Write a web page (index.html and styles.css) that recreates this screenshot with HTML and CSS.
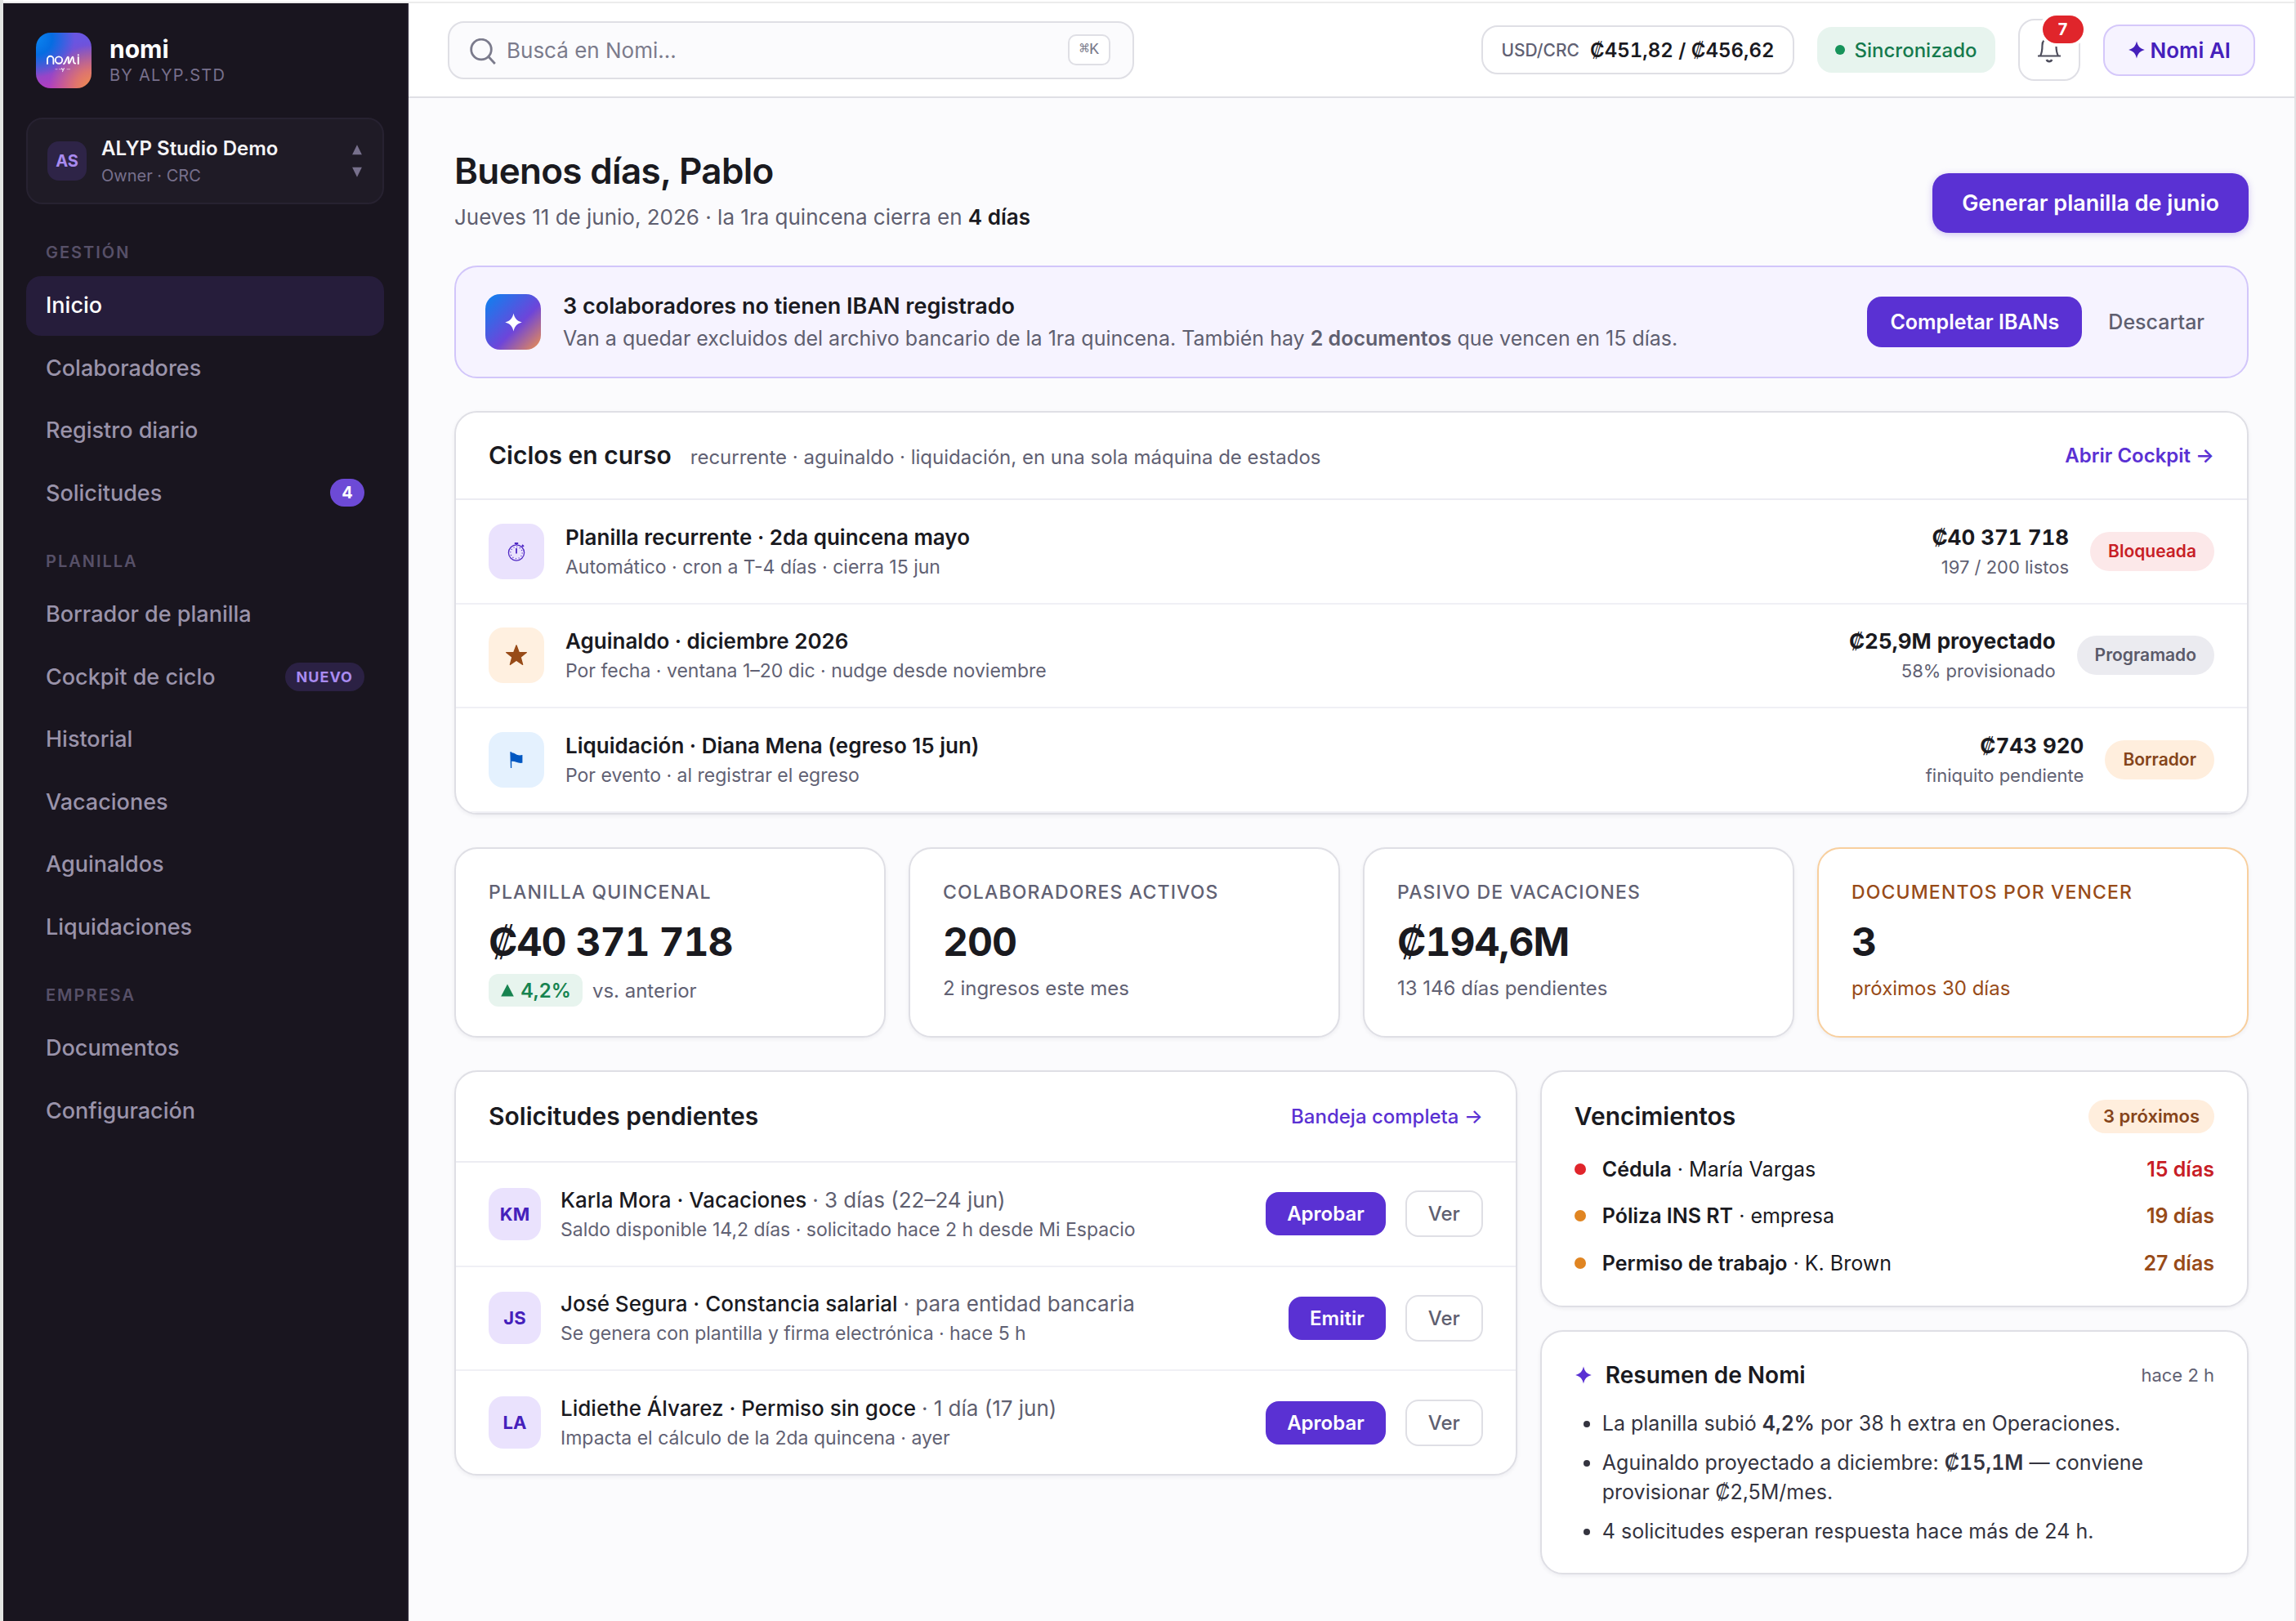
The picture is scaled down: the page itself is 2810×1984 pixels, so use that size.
FILE: index.html
```html
<!DOCTYPE html>
<html lang="es">
<head>
<meta charset="utf-8">
<title>Nomi · Inicio</title>
<link rel="stylesheet" href="styles.css">
</head>
<body>
<div class="app">
  <aside class="sidebar">
    <div class="brand">
      <div class="brand-logo">
        <svg viewBox="0 0 68 68" width="68" height="68" fill="none" stroke="#fff" stroke-width="1.900" stroke-linecap="round" stroke-linejoin="round">
          <path d="M14 38v-5.500a3.700 3.700 0 0 1 7.400 0V38"/>
          <circle cx="28" cy="33.600" r="4.200"/>
          <path d="M34 38.200c2.200-1 3.600-8.600 5.200-8.600s-.4 8 1.200 8 3-8 4.600-8-.4 8.400 3.200 8"/>
          <path d="M51.800 30v8M51.800 27.300v.1"/>
          <path d="M24 44.600h2M28.500 44.600h3M38 44.600h3.500" stroke-width="1.200" opacity=".4"/>
          <path d="M31.500 43.600l1.400 2.200 1.600-2.200-2 4" stroke-width="1.100" opacity=".8"/>
        </svg>
      </div>
      <div class="brand-text">
        <div class="brand-name">nomi</div>
        <div class="brand-sub">BY ALYP.STD</div>
      </div>
    </div>
    <div class="tenant">
      <div class="tenant-avatar">AS</div>
      <div class="tenant-text">
        <div class="tenant-name">ALYP Studio Demo</div>
        <div class="tenant-sub">Owner · CRC</div>
      </div>
      <svg class="tenant-arrows" width="12" height="40" viewBox="0 0 12 40" fill="currentColor"><path d="M6 .3l5.900 12H.1zM6 39.700L.1 27.700h11.800z"/></svg>
    </div>
    <nav class="nav">
      <div class="nav-label">GESTIÓN</div>
      <a class="nav-item active"><span>Inicio</span></a>
      <a class="nav-item"><span>Colaboradores</span></a>
      <a class="nav-item"><span>Registro diario</span></a>
      <a class="nav-item"><span>Solicitudes</span><span class="count">4</span></a>
      <div class="nav-label">PLANILLA</div>
      <a class="nav-item"><span>Borrador de planilla</span></a>
      <a class="nav-item"><span>Cockpit de ciclo</span><span class="new">NUEVO</span></a>
      <a class="nav-item"><span>Historial</span></a>
      <a class="nav-item"><span>Vacaciones</span></a>
      <a class="nav-item"><span>Aguinaldos</span></a>
      <a class="nav-item"><span>Liquidaciones</span></a>
      <div class="nav-label">EMPRESA</div>
      <a class="nav-item"><span>Documentos</span></a>
      <a class="nav-item"><span>Configuración</span></a>
    </nav>
  </aside>

  <div class="page">
    <header class="topbar">
      <div class="search">
        <svg width="32" height="32" viewBox="0 0 32 32" fill="none" stroke="currentColor" stroke-width="2.800"><circle cx="14" cy="13.500" r="12.300"/><path d="M22.500 22l8.300 9"/></svg>
        <span class="search-text">Buscá en Nomi...</span>
        <span class="kbd">⌘K</span>
      </div>
      <div class="tools">
        <div class="fx"><span class="fx-label">USD/CRC</span><span class="fx-value">₡451,82 / ₡456,62</span></div>
        <div class="sync"><i></i>Sincronizado</div>
        <div class="bell">
          <svg width="30" height="36" viewBox="0 0 30 36" fill="none" stroke="currentColor" stroke-width="2.200"><path d="M1 25.500h28M4 25.500C6.500 21 6.500 17 6.500 12.500 6.500 7 9.500 4 15 4s8.500 3 8.500 8.500c0 4.500 0 8.500 2.500 13M15 4V1"/><path d="M11.800 30c.6 1.600 1.800 2.200 3.200 2.200s2.600-.6 3.200-2.200" stroke-width="2.600"/></svg>
          <span class="bell-count">7</span>
        </div>
        <div class="ai"><svg width="20" height="22" viewBox="0 0 20 22" fill="currentColor"><path d="M10 .5C11.400 6.500 14 9.500 19.800 11 14 12.500 11.400 15.500 10 21.500 8.600 15.500 6 12.500.2 11 6 9.500 8.600 6.500 10 .5z"/></svg>Nomi AI</div>
      </div>
    </header>

    <main class="content">
      <section class="hero">
        <div>
          <h1>Buenos días, Pablo</h1>
          <p>Jueves 11 de junio, 2026 · la 1ra quincena cierra en <b>4 días</b></p>
        </div>
        <button class="btn btn-lg">Generar planilla de junio</button>
      </section>

      <section class="banner">
        <div class="banner-icon"><svg width="23" height="23" viewBox="0 0 20 22" fill="#fff"><path d="M10 .5C11.400 6.500 14 9.500 19.800 11 14 12.500 11.400 15.500 10 21.500 8.600 15.500 6 12.500.2 11 6 9.500 8.600 6.500 10 .5z"/></svg></div>
        <div class="banner-text">
          <div class="banner-title">3 colaboradores no tienen IBAN registrado</div>
          <div class="banner-sub">Van a quedar excluidos del archivo bancario de la 1ra quincena. También hay <b>2 documentos</b> que vencen en 15 días.</div>
        </div>
        <button class="btn btn-md">Completar IBANs</button>
        <button class="btn-ghost">Descartar</button>
      </section>

      <section class="card cycles">
        <div class="card-head">
          <h2>Ciclos en curso</h2>
          <span class="head-note">recurrente · aguinaldo · liquidación, en una sola máquina de estados</span>
          <a class="link strong">Abrir Cockpit →</a>
        </div>
        <div class="row">
          <div class="tile violet"><svg width="24" height="26" viewBox="0 0 24 26" fill="none" stroke="currentColor"><circle cx="12" cy="14.500" r="9.600" stroke-width="1.300"/><circle cx="12" cy="14.500" r="7.200" stroke-width="1.300" stroke-dasharray="1 2.770"/><path d="M12 9v6.500" stroke-width="1.800"/><path d="M12 5V3.600M18.500 7.500l1.500-1.600" stroke-width="1.300"/><path d="M9.800 3h4.400M19 4.900l2 2" stroke-width="1.800"/></svg></div>
          <div class="row-text"><div class="row-title">Planilla recurrente · 2da quincena mayo</div><div class="row-sub">Automático · cron a T-4 días · cierra 15 jun</div></div>
          <div class="row-amount"><div class="row-title bold">₡40 371 718</div><div class="row-sub">197 / 200 listos</div></div>
          <span class="pill red">Bloqueada</span>
        </div>
        <div class="row">
          <div class="tile orange"><svg width="28" height="28" viewBox="0 0 28 28" fill="currentColor" stroke="currentColor" stroke-width="1.200" stroke-linejoin="round"><path d="M14 1.800l3.200 8.500 9.200.2-7.200 5.700 2.500 9.300L14 20.300l-7.700 5.200 2.500-9.300-7.200-5.700 9.200-.2z"/></svg></div>
          <div class="row-text"><div class="row-title">Aguinaldo · diciembre 2026</div><div class="row-sub">Por fecha · ventana 1–20 dic · nudge desde noviembre</div></div>
          <div class="row-amount"><div class="row-title bold">₡25,9M proyectado</div><div class="row-sub">58% provisionado</div></div>
          <span class="pill gray">Programado</span>
        </div>
        <div class="row">
          <div class="tile blue"><svg width="16" height="20" viewBox="0 0 16 20" fill="currentColor"><path d="M.3.300h1.900v1c3.600-.4 5.200 2.600 8.300 3 1.600.2 2.900 0 4.900-.2v9.700c-6 .9-8.800-2.400-13.200-2V20H.900z"/></svg></div>
          <div class="row-text"><div class="row-title">Liquidación · Diana Mena (egreso 15 jun)</div><div class="row-sub">Por evento · al registrar el egreso</div></div>
          <div class="row-amount"><div class="row-title bold">₡743 920</div><div class="row-sub">finiquito pendiente</div></div>
          <span class="pill amber">Borrador</span>
        </div>
      </section>

      <section class="kpis">
        <div class="card kpi"><div class="kpi-label">PLANILLA QUINCENAL</div><div class="kpi-value">₡40 371 718</div><div class="kpi-sub"><span class="delta"><svg width="16" height="16" viewBox="0 0 16 16" fill="currentColor"><path d="M8 .5L15.800 15.600H.2z"/></svg>4,2%</span>vs. anterior</div></div>
        <div class="card kpi"><div class="kpi-label">COLABORADORES ACTIVOS</div><div class="kpi-value">200</div><div class="kpi-sub">2 ingresos este mes</div></div>
        <div class="card kpi"><div class="kpi-label">PASIVO DE VACACIONES</div><div class="kpi-value">₡194,6M</div><div class="kpi-sub">13 146 días pendientes</div></div>
        <div class="card kpi warn"><div class="kpi-label">DOCUMENTOS POR VENCER</div><div class="kpi-value">3</div><div class="kpi-sub">próximos 30 días</div></div>
      </section>

      <section class="columns">
        <div class="card requests">
          <div class="card-head">
            <h2>Solicitudes pendientes</h2>
            <a class="link">Bandeja completa →</a>
          </div>
          <div class="row">
            <div class="avatar">KM</div>
            <div class="row-text"><div class="row-title">Karla Mora · Vacaciones <span>· 3 días (22–24 jun)</span></div><div class="row-sub">Saldo disponible 14,2 días · solicitado hace 2 h desde Mi Espacio</div></div>
            <button class="btn btn-sm">Aprobar</button><button class="btn-outline">Ver</button>
          </div>
          <div class="row">
            <div class="avatar">JS</div>
            <div class="row-text"><div class="row-title">José Segura · Constancia salarial <span>· para entidad bancaria</span></div><div class="row-sub">Se genera con plantilla y firma electrónica · hace 5 h</div></div>
            <button class="btn btn-sm">Emitir</button><button class="btn-outline">Ver</button>
          </div>
          <div class="row">
            <div class="avatar">LA</div>
            <div class="row-text"><div class="row-title">Lidiethe Álvarez · Permiso sin goce <span>· 1 día (17 jun)</span></div><div class="row-sub">Impacta el cálculo de la 2da quincena · ayer</div></div>
            <button class="btn btn-sm">Aprobar</button><button class="btn-outline">Ver</button>
          </div>
        </div>

        <div class="side">
          <div class="card due">
            <div class="due-head"><h2>Vencimientos</h2><span class="pill amber small">3 próximos</span></div>
            <div class="due-row"><i class="dot-red"></i><span><b>Cédula</b> · María Vargas</span><b class="days-red">15 días</b></div>
            <div class="due-row"><i></i><span><b>Póliza INS RT</b> · empresa</span><b class="days">19 días</b></div>
            <div class="due-row"><i></i><span><b>Permiso de trabajo</b> · K. Brown</span><b class="days">27 días</b></div>
          </div>
          <div class="card summary">
            <div class="summary-head"><svg width="22" height="22" viewBox="0 0 20 22" fill="currentColor"><path d="M10 .5C11.400 6.500 14 9.500 19.800 11 14 12.500 11.400 15.500 10 21.500 8.600 15.500 6 12.500.2 11 6 9.500 8.600 6.500 10 .5z"/></svg><h3>Resumen de Nomi</h3><span>hace 2 h</span></div>
            <ul>
              <li>La planilla subió <b>4,2%</b> por 38 h extra en Operaciones.</li>
              <li>Aguinaldo proyectado a diciembre: <b>₡15,1M</b> — conviene provisionar ₡2,5M/mes.</li>
              <li>4 solicitudes esperan respuesta hace más de 24 h.</li>
            </ul>
          </div>
        </div>
      </section>
    </main>
  </div>
</div>
</body>
</html>
```
FILE: styles.css
```css
* { box-sizing: border-box; }
body { margin: 0; background: #fff; font-family: Inter, "Liberation Sans", sans-serif; color: #1a1a1f; -webkit-font-smoothing: antialiased; }
h1, h2, h3, p, ul { margin: 0; padding: 0; }
button { font-family: inherit; border: 0; margin: 0; cursor: pointer; white-space: nowrap; }
b { font-weight: 600; }
svg { display: block; flex: none; }

.app { display: flex; width: 2810px; height: 1984px; overflow: hidden; border-left: 4px solid #e3e5e3; border-right: 2px solid #e2e2e4; padding-top: 4px; background: linear-gradient(#fff 2px, #ececec 2px, #ececec 4px, #fbfbfd 4px); }

/* sidebar */
.sidebar { width: 496px; flex: none; background: #19151f; border-right: 2px solid #25202e; padding: 36px 28px 0; }
.brand { display: flex; align-items: center; gap: 22px; height: 68px; padding-left: 12px; }
.brand-logo { width: 68px; height: 68px; border-radius: 18px; background: radial-gradient(circle at 0% 10%, #0a84f0 0%, rgba(0,110,226,.95) 22%, rgba(0,110,226,0) 52%), radial-gradient(circle at 102% 100%, #f0914a 0%, rgba(232,125,95,.85) 22%, rgba(220,90,130,0) 55%), linear-gradient(170deg, #6a55e0 25%, #7c4dd0 48%, #b13ec0 88%); }
.brand-name { font-size: 30px; line-height: 36px; font-weight: 700; color: #fff; }
.brand-sub { font-size: 20px; line-height: 28px; letter-spacing: 1.250px; color: #77708c; }
.tenant { display: flex; align-items: center; height: 106px; margin-top: 36px; padding: 0 25px 0 24px; border: 2px solid #272231; border-radius: 20px; background: #1f1b26; }
.tenant-avatar { display: grid; place-items: center; width: 48px; height: 48px; border-radius: 14px; background: #2e2447; color: #a98bf0; font-size: 20px; font-weight: 700; }
.tenant-text { flex: 1; margin-left: 18px; padding-top: 1px; }
.tenant-name { font-size: 24px; line-height: 34px; font-weight: 600; color: #f4f3f6; }
.tenant-sub { font-size: 20px; line-height: 32px; color: #77708c; }
.tenant-arrows { color: #77708c; }
.nav { padding-top: 16px; display: flex; flex-direction: column; gap: 4px; }
.nav-label { height: 68px; padding: 28px 24px 0; font-size: 20px; line-height: 31px; font-weight: 600; letter-spacing: 2px; color: #575068; }
.nav-item { display: flex; align-items: center; justify-content: space-between; height: 72.500px; padding: 0 24px 1px; border-radius: 18px; font-size: 27px; font-weight: 500; color: #9a93aa; }
.nav-item.active { background: #261d3b; color: #fff; }
.count { min-width: 42px; height: 34px; border-radius: 17px; background: #6d4ad6; color: #fff; font-size: 20px; line-height: 34px; font-weight: 700; text-align: center; }
.new { height: 35px; padding: 0 14px; border-radius: 18px; background: #2b2144; color: #a98bf0; font-size: 18px; line-height: 35px; font-weight: 700; letter-spacing: 1px; }

/* top bar */
.page { flex: 1; min-width: 0; display: flex; flex-direction: column; }
.topbar { display: flex; align-items: center; justify-content: space-between; height: 116px; padding: 0 48px; background: #fff; border-bottom: 2px solid #dfdfe5; }
.search { display: flex; align-items: center; width: 840px; height: 71px; padding: 0 27px 0 25px; border: 2px solid #dfdfe5; border-radius: 20px; background: #fbfbfd; color: #7b7b8c; }
.search svg { margin-top: 4px; }
.search-text { flex: 1; margin-left: 13px; font-size: 26px; }
.kbd { width: 52px; height: 38px; border: 2px solid #dfdfe5; border-radius: 10px; background: #fff; font: 20px/34px "Liberation Mono", "DejaVu Sans Mono", monospace; text-align: center; }
.tools { display: flex; align-items: center; gap: 28px; }
.fx { display: flex; align-items: center; gap: 13px; height: 60px; padding: 0 22px; border: 2px solid #dfdfe5; border-radius: 20px; }
.fx-label { font-size: 21px; color: #616173; font-weight: 500; }
.fx-value { font-size: 24px; font-weight: 600; font-variant-numeric: tabular-nums; }
.sync { display: flex; align-items: center; gap: 12px; height: 56px; padding: 0 22px; border-radius: 18px; background: #e7f4ee; color: #157a4d; font-size: 24px; font-weight: 500; }
.sync i { width: 12px; height: 12px; border-radius: 50%; background: #17935a; }
.bell { position: relative; display: grid; place-items: center; width: 76px; height: 76px; border: 2px solid #dfdfe5; border-radius: 20px; color: #4d4d5c; }
.bell-count { position: absolute; right: -6px; top: -6px; width: 50px; height: 34px; border-radius: 17px; background: #e0252b; box-shadow: 0 0 0 4px #fff; color: #fff; font-size: 20px; line-height: 34px; font-weight: 700; text-align: center; }
.ai { display: flex; align-items: center; gap: 7px; height: 63px; padding: 0 28px 0 29px; border: 2px solid #d5c8fa; border-radius: 20px; background: #f6f3ff; color: #4520bb; font-size: 26px; font-weight: 600; }

/* content */
.content { flex: 1; display: flex; flex-direction: column; gap: 40px; padding: 56px 56px 0 56px; background: #fbfbfd; }
.hero { display: flex; justify-content: space-between; align-items: flex-end; height: 109px; }
h1 { font-size: 44px; line-height: 66px; font-weight: 600; letter-spacing: -.66px; }
.hero p { margin-top: 4px; font-size: 26px; line-height: 39px; color: #5f5f70; }
.hero b { color: #1a1a1f; }
.btn { background: #5a31d3; color: #fff; font-weight: 600; }
.btn-lg { height: 73px; padding: 0 36px; border-radius: 20px; font-size: 27px; box-shadow: 0 2px 8px rgba(90, 49, 211, .28); }
.btn-md { height: 62px; padding: 0 28px; border-radius: 18px; font-size: 25px; }
.btn-sm { height: 53px; padding: 0 26px; border-radius: 16px; font-size: 24px; }
.btn-ghost { padding: 0 52px 0 32px; background: none; color: #5f5f70; font-size: 25px; font-weight: 500; }
.btn-outline { height: 57px; margin-left: 24px; padding: 0 26px; border: 2px solid #dfdfe5; border-radius: 16px; background: #fff; color: #5f5f70; font-size: 24px; font-weight: 500; }
.banner { display: flex; align-items: center; height: 138px; padding-left: 36px; border: 2px solid #d2c6fa; border-radius: 28px; background: #f6f3ff; }
.banner-icon { display: grid; place-items: center; width: 68px; height: 68px; border-radius: 18px; background: linear-gradient(135deg, #0a84f0 0%, #6d45da 58%, #f0914a 100%); }
.banner-text { flex: 1; margin-left: 27px; }
.banner-title { font-size: 27px; line-height: 40px; font-weight: 600; }
.banner-sub { font-size: 25px; line-height: 38px; color: #5f5f70; }

.card { background: #fff; border: 2px solid #dfdfe5; border-radius: 28px; box-shadow: 0 2px 5px rgba(25, 20, 45, .06); }
.card-head { display: flex; align-items: center; height: 107px; padding: 0 40px; border-bottom: 2px solid #ececf2; }
h2 { margin-bottom: 2px; font-size: 30px; font-weight: 600; }
.head-note { margin: 4px 0 0 23px; font-size: 24px; color: #616173; }
.link { margin-left: auto; color: #5a31d3; font-size: 24px; font-weight: 500; }
.link.strong { font-weight: 600; }
.row { display: flex; align-items: center; height: 127.660px; padding: 0 40px; border-bottom: 2px solid #f0f0f5; }
.cycles { height: 494px; overflow: hidden; }
.tile { display: grid; place-items: center; width: 68px; height: 68px; border-radius: 18px; }
.violet { background: #eae2fd; color: #4f28c4; }
.orange { background: #fff0e0; color: #984b18; }
.blue { background: #e4f1fe; color: #0057c2; }
.row-text { flex: 1; margin-left: 26px; padding-top: 2px; }
.row-title { font-size: 26px; line-height: 36px; font-weight: 600; white-space: nowrap; }
.row-title.bold { font-weight: 700; font-variant-numeric: tabular-nums; }
.row-title span { font-weight: 400; color: #5f5f70; }
.row-sub { font-size: 23px; line-height: 36px; color: #616173; white-space: nowrap; }
.row-amount { text-align: right; margin-right: 26px; padding-top: 2px; }
.row-amount .row-sub { font-size: 22px; }
.pill { height: 48px; padding: 0 22px; border-radius: 24px; font-size: 21px; line-height: 48px; font-weight: 600; }
.pill.red { background: #fce8e9; color: #c81e26; }
.pill.gray { background: #ebebf0; color: #5a5a69; }
.pill.amber { background: #ffeedd; color: #85441a; }
.pill.small { height: 41px; line-height: 41px; padding: 0 18px; font-size: 22px; }

.kpis { display: grid; grid-template-columns: repeat(4, 1fr); gap: 28px; }
.kpi { height: 233px; padding: 38px 40px 0; }
.kpi-label { font-size: 23px; line-height: 30px; font-weight: 500; letter-spacing: 1.150px; color: #616173; }
.kpi-value { margin-top: 15px; font-size: 48px; line-height: 62px; font-weight: 700; letter-spacing: -1px; font-variant-numeric: tabular-nums; }
.kpi-sub { display: flex; align-items: center; gap: 12px; margin-top: 8px; font-size: 24px; line-height: 35px; color: #616173; }
.delta { display: flex; align-items: center; gap: 8px; height: 40px; padding: 0 14px 0 15px; border-radius: 12px; background: #e7f4ee; color: #178350; font-weight: 600; }
.warn { border-color: #f8cf9e; }
.warn .kpi-label, .warn .kpi-sub { color: #984b18; }

.columns { display: grid; grid-template-columns: 1.5fr 1fr; gap: 28px; align-items: start; }
.requests { height: 496px; }
.requests .card-head { height: 111px; }
.requests .row:last-child { height: 125.700px; border-bottom: 0; }
.requests .row-text { margin-left: 24px; }
.requests .row-title { font-weight: 500; }
.avatar { display: grid; place-items: center; width: 64px; height: 64px; border-radius: 18px; background: #eae2fd; color: #4520bb; font-size: 22px; font-weight: 700; }
.side { display: flex; flex-direction: column; gap: 28px; }
.due { height: 290px; padding: 34px 40px 0; }
.due-head { display: flex; align-items: center; justify-content: space-between; height: 41px; margin-bottom: 15px; }
.due-row { display: flex; align-items: center; height: 57.500px; font-size: 25px; }
.due-row i { width: 14px; height: 14px; margin-right: 20px; border-radius: 50%; background: #e08522; }
.due-row .dot-red { background: #e0252b; }
.due-row span { flex: 1; }
.days { color: #984b18; }
.days-red { color: #c81e26; }
.summary { height: 299px; padding: 33px 40px 0; }
.summary-head { display: flex; align-items: center; height: 40px; color: #5a31d3; }
.summary-head h3 { flex: 1; margin-left: 16px; font-size: 28px; font-weight: 600; color: #1a1a1f; }
.summary-head span { font-size: 22px; color: #616173; }
.summary ul { margin-top: 21px; padding-left: 34px; color: #34343f; }
.summary li { margin-bottom: 12px; font-size: 25px; line-height: 36px; }
.summary b { font-variant-numeric: tabular-nums; }
```
